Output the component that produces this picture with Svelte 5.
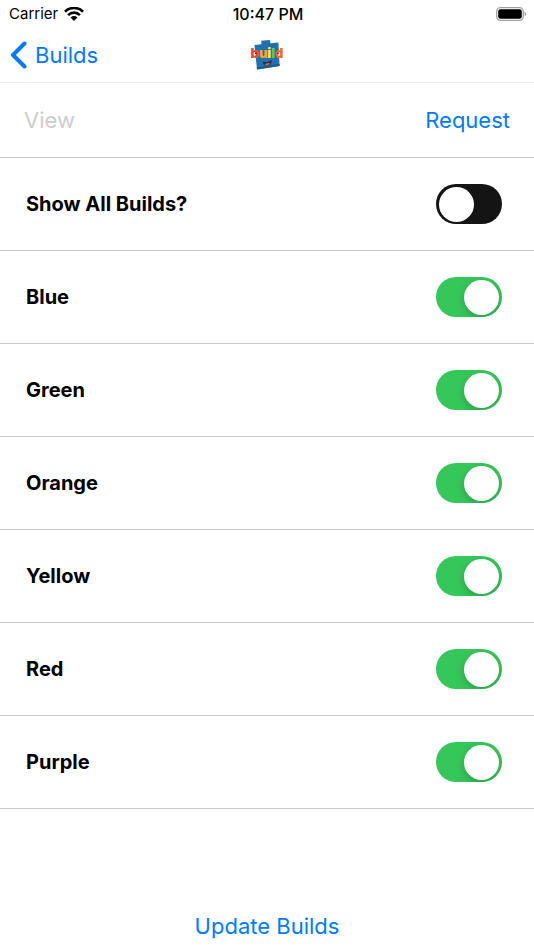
<script lang="ts">
  let showAll = $state(false);

  let builds = $state([
    { name: "Blue", on: true },
    { name: "Green", on: true },
    { name: "Orange", on: true },
    { name: "Yellow", on: true },
    { name: "Red", on: true },
    { name: "Purple", on: true },
  ]);
</script>

<div class="screen">
  <div class="status-bar">
    <div class="carrier">
      <span>Carrier</span>
      <svg width="20" height="14" viewBox="0 0 20 14" aria-hidden="true">
        <g fill="none" stroke="#000" stroke-width="2.7">
          <path d="M1 4.7a12.8 12.8 0 0 1 18 0" />
          <path d="M4.1 8.1a8.4 8.4 0 0 1 11.8 0" />
        </g>
        <path d="M6.6 10.4a4.9 4.9 0 0 1 6.8 0L10 13.9z" />
      </svg>
    </div>
    <span class="time">10:47 PM</span>
    <svg class="battery" width="31" height="14" viewBox="0 0 31 14" aria-hidden="true">
      <rect x="0.7" y="0.7" width="26.6" height="12.6" rx="3.8" fill="none" stroke="#a0a0a0" stroke-width="1.3" />
      <rect x="2.2" y="2.2" width="23.6" height="9.6" rx="2.3" />
      <path d="M28.7 4.6c1.8.7 1.8 4.1 0 4.8z" fill="#999" />
    </svg>
  </div>

  <header class="nav-bar">
    <button class="back" type="button">
      <svg width="17" height="28" viewBox="0 0 17 28" aria-hidden="true">
        <path d="M14.5 2.5 3 14l11.5 11.5" fill="none" stroke="currentColor" stroke-width="4" stroke-linecap="round" stroke-linejoin="round" />
      </svg>
      <span>Builds</span>
    </button>
    <svg class="logo" width="32" height="32" viewBox="0 0 32 32" role="img" aria-label="build">
      <path d="M3.5 6 10.4 5.3 10.2 1.8 19 1 19.4 4.3 27.4 3.6 28.6 27 6 30.6z" fill="#2270ac" />
      <path d="M6 30.6 5.8 28.4l22.7-3.6.1 2.2z" fill="#175c94" />
      <path d="M11.8 22.4c3.4 1.2 6.4.6 9-1.4-.2 3.8-2 6-4.8 6-2.2 0-3.6-1.7-4.2-4.6z" fill="#182f49" />
      <path d="M13.6 25.2c1.6-1.1 3.8-1.4 5.5-.9-1.4 2.6-3.8 3.4-5.5.9z" fill="#e0583f" />
      <circle cx="4.6" cy="14.4" r="2.4" fill="#fff" />
      <circle cx="27.2" cy="14.4" r="2.4" fill="#fff" />
      <text class="logo-text" x="16" y="19" text-anchor="middle"><tspan fill="#f0452e">b</tspan><tspan fill="#ffa51c">u</tspan><tspan fill="#ffe53a">i</tspan><tspan fill="#5fcb4c">l</tspan><tspan fill="#fa6a1c">d</tspan></text>
      <circle cx="4.8" cy="14.4" r="0.8" fill="#222" />
      <circle cx="27" cy="14.4" r="0.8" fill="#222" />
    </svg>
  </header>

  <div class="tabs">
    <button class="link" type="button" disabled>View</button>
    <button class="link" type="button">Request</button>
  </div>

  <main>
    <label class="row">
      <span>Show All Builds?</span>
      <input class="switch" type="checkbox" role="switch" bind:checked={showAll} />
    </label>
    {#each builds as build (build.name)}
      <label class="row">
        <span>{build.name}</span>
        <input class="switch" type="checkbox" role="switch" bind:checked={build.on} />
      </label>
    {/each}
  </main>

  <footer>
    <button class="link" type="button">Update Builds</button>
  </footer>
</div>

<style>
  :global(body) {
    background: #fff;
  }

  .screen {
    display: flex;
    flex-direction: column;
    min-height: 100vh;
    color: #000;
    font-family: Inter, "Liberation Sans", sans-serif;
  }

  .status-bar {
    display: grid;
    grid-template-columns: 1fr auto 1fr;
    align-items: center;
    height: 27px;
    padding: 0 7px 0 9px;
    font-size: 15px;
  }

  .carrier {
    display: flex;
    align-items: center;
    gap: 6px;
  }

  .time {
    font-size: 16px;
    font-weight: 500;
  }

  .battery {
    justify-self: end;
  }

  .nav-bar {
    display: grid;
    grid-template-columns: 1fr auto 1fr;
    align-items: center;
    height: 55px;
    padding: 0 10px;
    border-bottom: 1px solid #ececec;
  }

  button {
    padding: 0;
    border: none;
    background: none;
    color: #007aff;
    font-family: inherit;
    font-size: 22px;
    line-height: 28px;
    cursor: pointer;
  }

  .back {
    display: flex;
    align-items: center;
    justify-self: start;
    gap: 8px;
  }

  .logo-text {
    font-family: Inter, sans-serif;
    font-size: 13px;
    font-weight: 900;
  }

  .tabs {
    display: flex;
    align-items: center;
    justify-content: space-between;
    height: 74px;
    padding: 0 24px;
    border-bottom: 1px solid #c8c8c8;
  }

  .link:disabled {
    color: #cdcdcd;
    cursor: default;
  }

  .row {
    display: flex;
    align-items: center;
    justify-content: space-between;
    height: 92px;
    padding: 0 32px 0 26px;
    border-bottom: 1px solid #c8c8c8;
    font-size: 20px;
    font-weight: 700;
  }

  .switch {
    display: flex;
    align-items: center;
    appearance: none;
    width: 66px;
    height: 40px;
    margin: 0;
    padding: 0 3px;
    border-radius: 20px;
    background: #141414;
    overflow: hidden;
    cursor: pointer;
  }

  .switch::before {
    content: "";
    width: 35px;
    height: 35px;
    border-radius: 50%;
    background: #fff;
  }

  .switch:checked {
    justify-content: flex-end;
    background: #35c759;
  }

  .switch:checked::before {
    box-shadow: 0 3px 8px rgba(0, 0, 0, 0.2);
  }

  footer {
    display: flex;
    justify-content: center;
    margin-top: auto;
    padding: 24px 0 10px;
  }
</style>
